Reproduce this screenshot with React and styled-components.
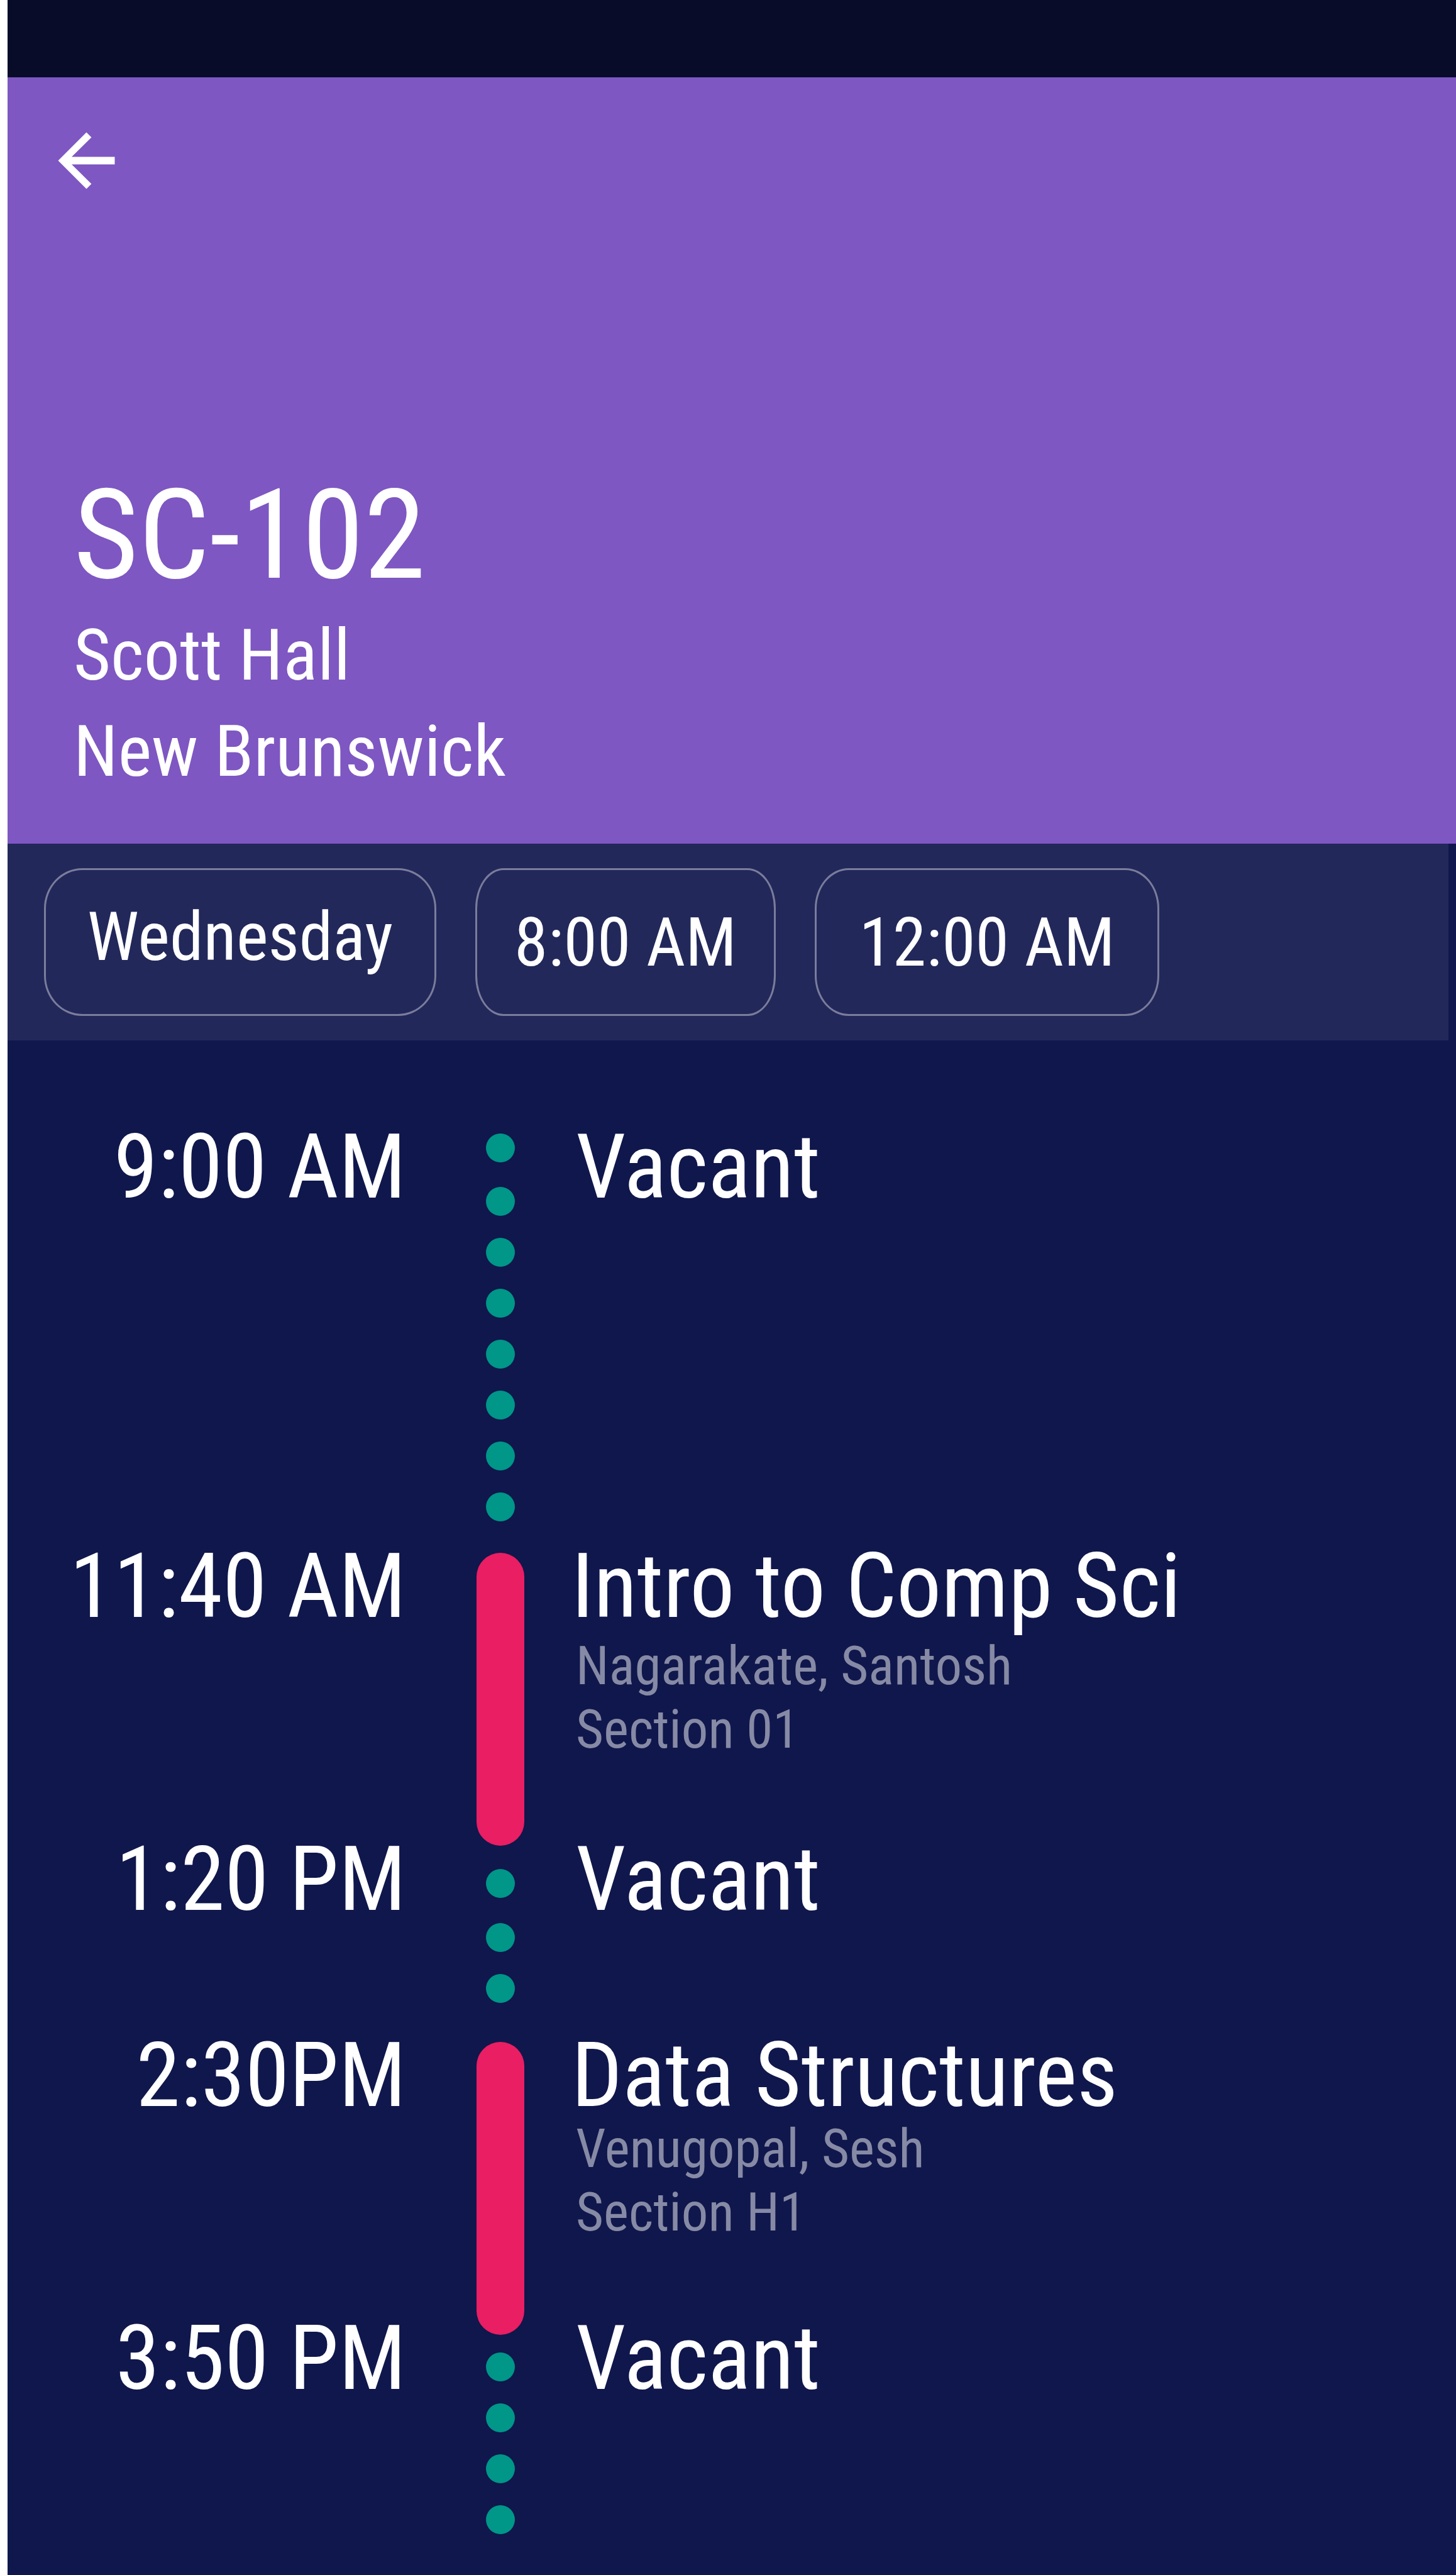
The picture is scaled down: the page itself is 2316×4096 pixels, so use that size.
import React from "react";
import styled, { createGlobalStyle } from "styled-components";

const colors = {
  status: "#080c29",
  header: "#7e57c2",
  bar: "#22285a",
  page: "#0f174c",
  vacant: "#009688",
  busy: "#e91e63",
  outline: "#7a7d9b",
  muted: "#878aa5",
};

const GlobalStyle = createGlobalStyle`
  *, *::before, *::after { box-sizing: border-box; }
  body {
    margin: 0;
    background: #ffffff;
    color: #ffffff;
    font-family: "Roboto Condensed", Roboto, "Liberation Sans Narrow", sans-serif;
  }
`;

const Page = styled.div`
  display: flex;
  flex-direction: column;
  min-height: 100vh;
  margin-left: 12px;
  background: ${colors.page};
`;

const StatusBar = styled.div`
  height: 123px;
  background: ${colors.status};
`;

const Header = styled.header`
  display: flex;
  flex-direction: column;
  align-items: flex-start;
  justify-content: space-between;
  min-height: 1219px;
  padding: 65px 58px 70px;
  background: ${colors.header};
`;

const BackButton = styled.button`
  display: flex;
  padding: 0;
  border: 0;
  background: none;
  color: inherit;
  cursor: pointer;
`;

const Heading = styled.div`
  padding-left: 47px;
`;

const RoomName = styled.h1`
  margin: 0 0 15px;
  font-size: 199px;
  font-weight: 400;
  line-height: 200px;
`;

const Place = styled.p`
  margin: 0;
  font-size: 114px;
  line-height: 153px;
`;

const FilterBar = styled.nav`
  display: flex;
  gap: 62px;
  margin-right: 12px;
  padding: 39px 58px;
  background: ${colors.bar};
`;

const Chip = styled.button`
  width: ${(p) => p.$width}px;
  height: 235px;
  padding: 0 0 ${(p) => (p.$descends ? 18 : 0)}px;
  border: 3px solid ${colors.outline};
  border-radius: ${(p) => p.$corner}px / 64px;
  background: none;
  color: inherit;
  font-family: inherit;
  font-size: 108px;
  line-height: 126px;
  white-space: nowrap;
  cursor: pointer;
`;

const Timeline = styled.ol`
  flex: 1;
  margin: 0;
  padding: 148px 0 0;
  list-style: none;
`;

const Slot = styled.li`
  display: grid;
  grid-template-columns: 634px 300px 1fr;
  height: ${(p) => p.$height}px;
  font-size: 142px;
  line-height: 108px;
`;

const Time = styled.time`
  text-align: right;
  white-space: nowrap;
`;

const Track = styled.div`
  display: flex;
  flex-direction: column;
  align-items: center;
  gap: 35px;
  padding-top: ${(p) => p.$inset}px;
`;

const Dot = styled.span`
  flex: none;
  width: 46px;
  height: 46px;
  border-radius: 50%;
  background: ${colors.vacant};

  &:first-child {
    margin-bottom: ${(p) => p.$lead}px;
  }
`;

const Bar = styled.span`
  flex: none;
  width: 76px;
  height: 466px;
  border-radius: 38px;
  background: ${colors.busy};
`;

const Info = styled.div`
  margin-left: -30px;
`;

const Title = styled.h2`
  margin: 0 0 0 ${(p) => (p.$busy ? -7 : 0)}px;
  font-size: inherit;
  font-weight: 400;
`;

const Details = styled.div`
  margin-top: ${(p) => p.$gap}px;
  color: ${colors.muted};
  font-size: 85px;
  line-height: 101px;
`;

const filters = [
  { label: "Wednesday", width: 624, corner: 61, descends: true },
  { label: "8:00 AM", width: 478, corner: 45 },
  { label: "12:00 AM", width: 548, corner: 54 },
];

const slots = [
  { time: "9:00 AM", title: "Vacant", height: 667, dots: 8, inset: 0, lead: 4 },
  {
    time: "11:40 AM",
    title: "Intro to Comp Sci",
    height: 466,
    details: ["Nagarakate, Santosh", "Section 01"],
    gap: 22,
  },
  { time: "1:20 PM", title: "Vacant", height: 312, dots: 3, inset: 37, lead: 5 },
  {
    time: "2:30PM",
    title: "Data Structures",
    height: 450,
    details: ["Venugopal, Sesh", "Section H1"],
    gap: 12,
  },
  { time: "3:50 PM", title: "Vacant", height: 340, dots: 4, inset: 44, lead: 0 },
];

function BackArrow() {
  return (
    <svg width="135" height="135" viewBox="0 0 24 24" fill="currentColor" aria-hidden="true">
      <path d="M20 10.94H7.83l5.59-5.53L12 4l-8 8 8 8 1.41-1.41-5.58-5.53H20z" />
    </svg>
  );
}

export default function App() {
  return (
    <>
      <GlobalStyle />
      <Page>
        <StatusBar />
        <Header>
          <BackButton type="button" aria-label="Back">
            <BackArrow />
          </BackButton>
          <Heading>
            <RoomName>SC-102</RoomName>
            <Place>Scott Hall</Place>
            <Place>New Brunswick</Place>
          </Heading>
        </Header>
        <FilterBar>
          {filters.map((f) => (
            <Chip key={f.label} type="button" $width={f.width} $corner={f.corner} $descends={f.descends}>
              {f.label}
            </Chip>
          ))}
        </FilterBar>
        <Timeline>
          {slots.map((slot) => (
            <Slot key={slot.time} $height={slot.height}>
              <Time>{slot.time}</Time>
              <Track $inset={slot.inset || 0}>
                {slot.dots
                  ? Array.from({ length: slot.dots }, (_, i) => <Dot key={i} $lead={slot.lead} />)
                  : <Bar />}
              </Track>
              <Info>
                <Title $busy={!slot.dots}>{slot.title}</Title>
                {slot.details && (
                  <Details $gap={slot.gap}>
                    {slot.details.map((line) => (
                      <div key={line}>{line}</div>
                    ))}
                  </Details>
                )}
              </Info>
            </Slot>
          ))}
        </Timeline>
      </Page>
    </>
  );
}
